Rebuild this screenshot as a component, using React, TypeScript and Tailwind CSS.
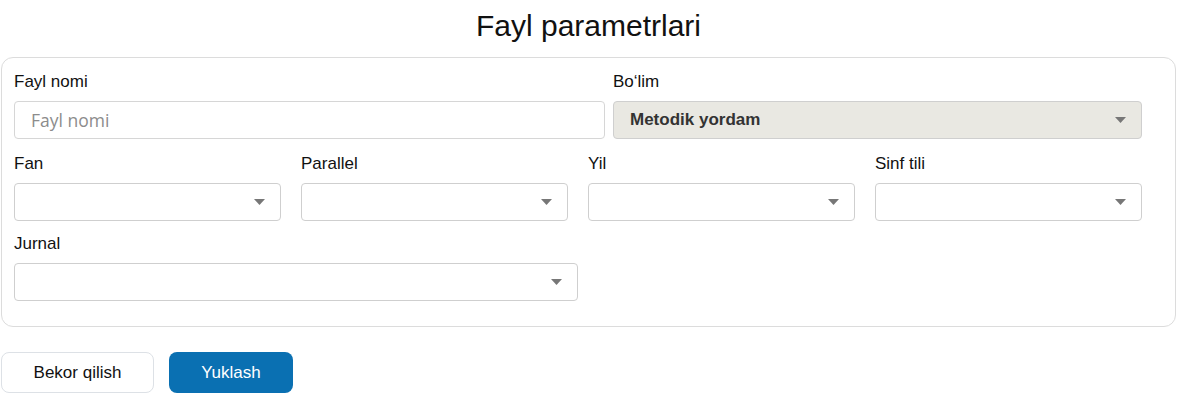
import React from "react";

function Arrow() {
  return (
    <svg width="11" height="6" viewBox="0 0 11 6" className="absolute right-[15px] top-1/2 -translate-y-1/2">
      <path d="M0 0 H11 L5.5 6 Z" fill="#777777" />
    </svg>
  );
}

function Select({ value, disabled, className = "" }: { value?: string; disabled?: boolean; className?: string }) {
  return (
    <div
      className={
        "relative h-[38px] rounded-[4px] border border-[#cfcfcf] flex items-center pl-[16px] " +
        (disabled ? "bg-[#e9e8e2] " : "bg-white ") +
        className
      }
    >
      {value && <span className="text-[17px] font-bold text-[#333333]">{value}</span>}
      <Arrow />
    </div>
  );
}

function Label({ children }: { children: React.ReactNode }) {
  return <div className="text-[17px] leading-[24px] text-[#111111] mb-[7px]">{children}</div>;
}

export default function App() {
  return (
    <div className="w-[1185px] h-[403px] bg-white font-['Liberation_Sans',Arial,sans-serif] overflow-hidden">
      <div className="ml-[1px] w-[1175px]">
        <h1 className="pt-[8px] text-center text-[30px] leading-[36px] text-[#111111] mb-[13px]">Fayl parametrlari</h1>
        <div className="rounded-[12px] border border-[#dcdcdc] pl-[12px] pr-[33px] pt-[12px] pb-[25px]">
          <div className="flex gap-[8px]">
            <div className="w-[591px]">
              <Label>Fayl nomi</Label>
              <input
                placeholder="Fayl nomi"
                className="w-full h-[38px] rounded-[4px] border border-[#d6d6d6] pl-[16px] text-[17.5px] font-['Open_Sans',sans-serif] placeholder:text-[#8c8c8c] outline-none"
              />
            </div>
            <div className="flex-1">
              <Label>Bo‘lim</Label>
              <Select value="Metodik yordam" disabled />
            </div>
          </div>
          <div className="grid grid-cols-4 gap-x-[20px] mt-[13px]">
            <div>
              <Label>Fan</Label>
              <Select />
            </div>
            <div>
              <Label>Parallel</Label>
              <Select />
            </div>
            <div>
              <Label>Yil</Label>
              <Select />
            </div>
            <div>
              <Label>Sinf tili</Label>
              <Select />
            </div>
          </div>
          <div className="mt-[11px] w-[564px]">
            <Label>Jurnal</Label>
            <Select />
          </div>
        </div>
        <div className="flex gap-[15px] mt-[25px]">
          <button className="w-[153px] h-[41px] rounded-[8px] border border-[#dde1e6] bg-white text-[17px] text-[#111111]">
            Bekor qilish
          </button>
          <button className="w-[124px] h-[41px] rounded-[8px] bg-[#0a70b2] text-[17px] text-white">
            Yuklash
          </button>
        </div>
      </div>
    </div>
  );
}
